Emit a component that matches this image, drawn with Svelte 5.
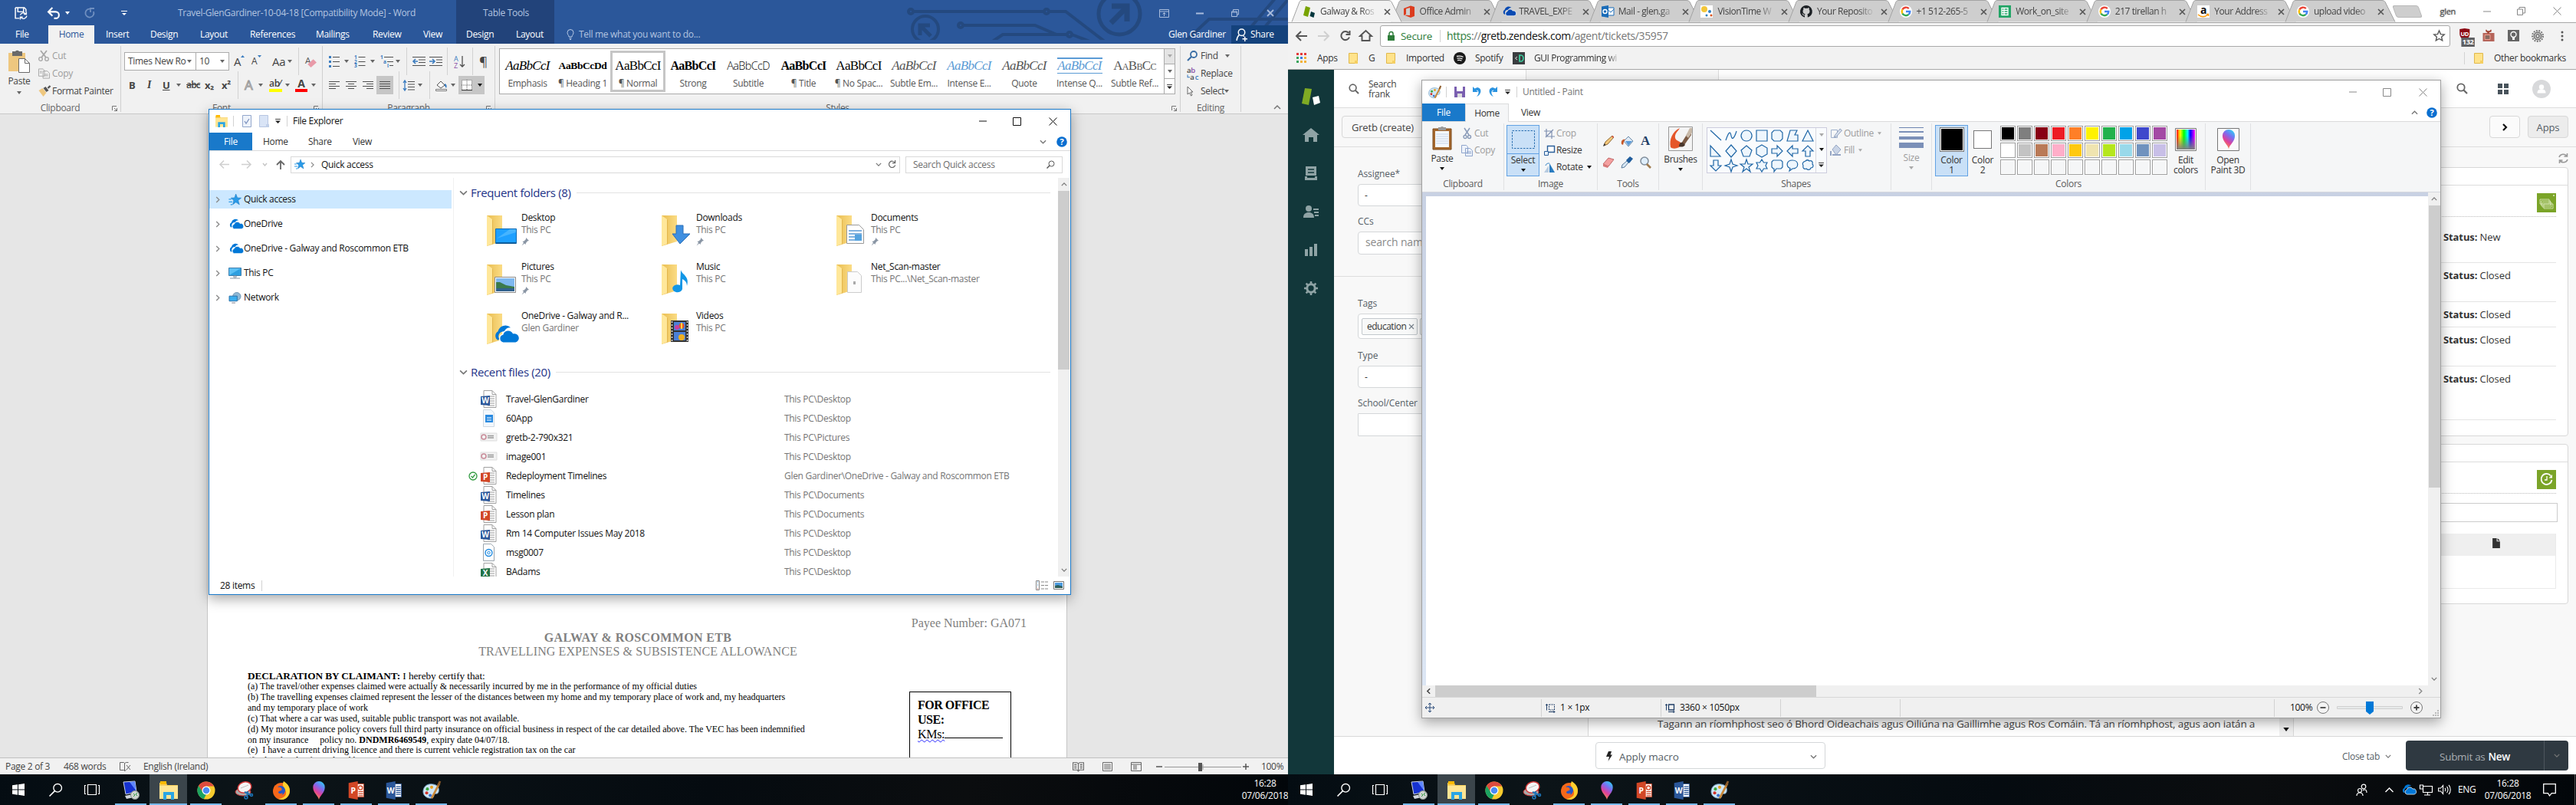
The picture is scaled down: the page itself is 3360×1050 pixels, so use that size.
<script>
  // Row item builders: x is the desktop x of the item, w its width.
  const I = (i, x, w, h = w, c = '') => ({ i, x, w, h, c });
  const T = (t, x, w, c = '') => ({ t, x, w, c });
  const V = (x, h = 36) => ({ i: 'sep', x, w: 1, h, c: 'vsep' });
  const D = (x) => ({ i: 'caret', x: x - 3, w: 6, h: 4, c: '' });

  const folderBase = '<path d="M0 0h20v34l-20 6z" fill="url(#fg)"/><path d="M0 0l7 5v32l-7 3z" fill="#ffe79a"/><path d="M7 5v32l1 .5V6z" fill="#e3b64c"/>';
  const cloud = '<path d="M4 12a4 4 0 0 1 0-7 6 6 0 0 1 10-3 5 5 0 0 0-5 3 4 4 0 0 0-4 6z" fill="#0078d7"/><path d="M8 14a3.4 3.4 0 0 1-.3-6.600A4.500 4.500 0 0 1 16 6.500 3.800 3.800 0 0 1 18 14z" fill="#0078d7" stroke="#fff" stroke-width=".8"/>';
  const officeDoc = (col, ch) => `<path d="M4 .5h11l5 5v17H4z" fill="#fff" stroke="#a0a0a0"/><path d="M15 .5v5h5" fill="none" stroke="#a0a0a0"/><path d="M9 8h9M9 11h9M9 14h9M9 17h9M9 20h9" stroke="#9a9a9a"/><path d="M0 8l12-1v13L0 19z" fill="${col}"/><text x="6" y="17" font-size="10" font-weight="700" fill="#fff" text-anchor="middle" font-family="Open Sans">${ch}</text>`;
  const officeApp = (col, ch, extra) => `<path d="M12 4h11v20H12z" fill="#fff" stroke="${col}"/>${extra}<path d="M0 2.500L14 0v28L0 25.500z" fill="${col}"/><text x="7" y="18.500" font-size="12" font-weight="700" fill="#fff" text-anchor="middle" font-family="Open Sans">${ch}</text>`;
  const google = '<circle cx="8" cy="8" r="8" fill="#fff"/><g fill="none" stroke-width="2.400"><path d="M11.800 4.200A5.300 5.300 0 0 0 3.400 5.400" stroke="#ea4335"/><path d="M3.400 5.400a5.300 5.300 0 0 0 0 5.200" stroke="#fbbc05"/><path d="M3.400 10.600a5.300 5.300 0 0 0 8.100 1.300" stroke="#34a853"/><path d="M11.500 11.900A5 5 0 0 0 13.300 8H8" stroke="#4285f4"/></g>';
  const alignLines = (a) => a.map(([x, w], n) => `<path d="M${x} ${1.5 + n * 3}h${w}" stroke="#505050"/>`).join('');

  const icons = {
    sep: ['1 1', ''],
    caret: ['6 4', '<path d="M0 0h6L3 4z" fill="#666"/>'],
    caretB: ['6 4', '<path d="M0 0h6L3 4z" fill="#111"/>'],
    caretW: ['6 4', '<path d="M0 0h6L3 4z" fill="#fff"/>'],
    caretG: ['6 4', '<path d="M0 0h6L3 4z" fill="#a9a9a9"/>'],
    qaW: ['8 7', '<path d="M0 .5h8" stroke="#fff"/><path d="M1 3h6L4 6z" fill="#fff"/>'],
    qaB: ['8 7', '<path d="M0 .5h8" stroke="#222"/><path d="M0 3h8L4 7z" fill="#222"/>'],
    wsave: ['16 16', '<path d="M1 1h11l2 2v3M1 1v13h5M4 1v5h7V1" fill="none" stroke="#fff" stroke-width="1.400"/><path d="M7 10a4 4 0 0 1 7-1M15 11a4 4 0 0 1-7 2M14.500 6v3h-3M7 15.500v-3h3" fill="none" stroke="#fff" stroke-width="1.300"/>'],
    wundo: ['16 14', '<path d="M6 0L1 5l5 5M1.500 5H10a4 4 0 0 1 0 8H8" fill="none" stroke="#fff" stroke-width="2"/>'],
    wredo: ['14 14', '<path d="M9 2A5.500 5.500 0 1 0 12 5M8 6V1h5" fill="none" stroke="#6f8fc0" stroke-width="1.800"/>'],
    bulb: ['10 14', '<path d="M3 10C3 8 1 7 1 4.500a4 4 0 0 1 8 0C9 7 7 8 7 10zM3.500 12h3M4 13.500h2" fill="none" stroke="#b9cbe6"/>'],
    ribbonOpt: ['13 11', '<path d="M.5.5h12v10H.5zM.5 3h12M6.500 9V5M4.500 6.500l2-2 2 2" fill="none" stroke="#a9bcdc"/>'],
    wmin: ['10 3', '<path d="M0 1.500h10" stroke="#a9bcdc" stroke-width="2"/>'],
    wres: ['10 10', '<path d="M.5 3h7v6.500h-7zM2.500 3V.5h7V7h-2M.5 4h7" fill="none" stroke="#a9bcdc"/>'],
    wx: ['10 10', '<path d="M1 1l8 8M9 1l-8 8" stroke="#a9bcdc" stroke-width="1.800"/>'],
    person: ['14 16', '<circle cx="7" cy="5" r="4" fill="none" stroke="#fff" stroke-width="1.400"/><path d="M4 8c-2 2-3 4-3 7M9 9l1 1M8 13h6M11 10v6" fill="none" stroke="#fff" stroke-width="1.400"/>'],
    paste: ['28 30', '<path d="M0 4h22v24H0z" fill="#eec77f"/><path d="M5 2h4a3 3 0 0 1 5 0h4v6H5z" fill="#6a6a6a"/><path d="M13.500 11.500h8l6 6v12h-14z" fill="#fff" stroke="#6a6a6a"/><path d="M21.500 11.500v6h6" fill="none" stroke="#6a6a6a"/>'],
    cut: ['14 14', '<path d="M3 0l7 9M11 0L4 9" stroke="#a6a6a6" stroke-width="1.800"/><circle cx="3" cy="11" r="2.300" fill="none" stroke="#a6a6a6" stroke-width="1.300"/><circle cx="11" cy="11" r="2.300" fill="none" stroke="#a6a6a6" stroke-width="1.300"/>'],
    copy: ['16 14', '<path d="M.5.500h6l2 2v8h-8zM6.500 3.500h6l3 3v7h-9z" fill="#f1f1f1" stroke="#a6a6a6"/><path d="M2 4h3M2 6h3M8.500 8h5M8.500 10h5" stroke="#a6a6a6"/>'],
    fpaint: ['15 14', '<path d="M0 6l5-3 5 6-4 5z" fill="#eec77f"/><path d="M6 3l3-2 4 5-3 2z" fill="#555"/><path d="M12 3l3-3" stroke="#555" stroke-width="2.400"/>'],
    up: ['5 3', '<path d="M0 3l2.500-3L5 3z" fill="#3a7cc0"/>'],
    eraser: ['14 16', '<text x="0" y="10" font-size="11" fill="#555" font-family="Open Sans">A</text><path d="M3 11l7-6 4 4-7 6z" fill="#e89aa8"/>'],
    bullets: ['14 15', '<g fill="#3a7cc0"><path d="M0 0h3v3H0zM0 6h3v3H0zM0 12h3v3H0z"/></g><path d="M5 1.500h9M5 7.500h9M5 13.500h9" stroke="#505050"/>'],
    numbering: ['15 16', '<g fill="#3a7cc0" font-size="6.500" font-family="Open Sans" font-weight="700"><text x="0" y="5">1</text><text x="0" y="11">2</text><text x="0" y="16">3</text></g><path d="M5.500 2.500h9M5.500 8.500h9M5.500 13.500h9" stroke="#505050"/>'],
    multi: ['18 16', '<g fill="#3a7cc0" font-size="6.500" font-family="Open Sans" font-weight="700"><text x="0" y="5">1</text><text x="4" y="11">a</text><text x="9" y="16">i</text></g><path d="M5 2.500h12M9 8.500h8M12 13.500h5" stroke="#505050"/>'],
    outdent: ['17 12', '<path d="M0 .5h17M8 4h9M8 7.500h9M0 11.500h17" stroke="#505050"/><path d="M7 6H1M4 3L1 6l3 3" fill="none" stroke="#3a7cc0" stroke-width="1.600"/>'],
    indent: ['17 12', '<path d="M0 .5h17M9 4h8M9 7.500h8M0 11.500h17" stroke="#505050"/><path d="M0 6h6M4 3l3 3-3 3" fill="none" stroke="#3a7cc0" stroke-width="1.600"/>'],
    sort: ['15 17', '<text x="0" y="8" font-size="9" fill="#3a7cc0" font-family="Open Sans">A</text><text x="0" y="16.500" font-size="9" fill="#8a50a8" font-family="Open Sans">Z</text><path d="M11 1v14M8 12l3 3 3-3" fill="none" stroke="#505050" stroke-width="1.300"/>'],
    al: ['14 12', alignLines([[0, 14], [0, 9], [0, 14], [0, 9]])],
    ac: ['14 12', alignLines([[0, 14], [3, 8], [0, 14], [3, 8]])],
    ar: ['14 12', alignLines([[0, 14], [5, 9], [0, 14], [5, 9]])],
    aj: ['14 12', alignLines([[0, 14], [0, 14], [0, 14], [0, 14]])],
    spacing: ['16 15', '<path d="M3 1v13M1 4l2-3 2 3M1 11l2 3 2-3" fill="none" stroke="#3a7cc0" stroke-width="1.300"/><path d="M7 2.500h9M7 6h9M7 9.500h9M7 13h9" stroke="#505050"/>'],
    wbucket: ['16 15', '<path d="M2 7l5-5 5 5-5 4z" fill="#fff" stroke="#505050"/><path d="M12 5c3 1 3 4 2 6l-2-3z" fill="#3a7cc0"/><path d="M.5 12.500h14v2H.5z" fill="#fff" stroke="#777"/>'],
    borders: ['14 14', '<path d="M0 0h14v14H0z" fill="#fff"/><path d="M.5 .5h13v13H.5zM7 0v14M0 7h14" fill="none" stroke="#555" stroke-dasharray="1 1"/><path d="M0 13.500h14" stroke="#333"/>'],
    launch: ['7 7', '<path d="M.5 6V.5H6M3 3l3.500 3.500M6.500 3v3.500H3" fill="none" stroke="#777"/>'],
    find: ['14 14', '<circle cx="9" cy="5" r="4" fill="none" stroke="#3a6ea5" stroke-width="1.800"/><path d="M6 8l-5 5" stroke="#3a6ea5" stroke-width="2.200"/>'],
    replace: ['16 15', '<text x="0" y="7" font-size="9" font-weight="600" fill="#444" font-family="Open Sans">a</text><text x="5" y="7" font-size="9" font-weight="600" fill="#8a50a8" font-family="Open Sans">b</text><text x="4" y="15" font-size="9" font-weight="600" fill="#444" font-family="Open Sans">a</text><text x="10" y="15" font-size="9" font-weight="600" fill="#3a7cc0" font-family="Open Sans">c</text><path d="M1 9v3h3" fill="none" stroke="#3a7cc0"/>'],
    cursor: ['9 14', '<path d="M1 1v10l2.500-2 2 4 1.500-1-2-4h3z" fill="#fff" stroke="#666"/>'],
    chevUp: ['10 6', '<path d="M1 5l4-4 4 4" fill="none" stroke="#777" stroke-width="1.500"/>'],
    chevDn: ['10 6', '<path d="M1 1l4 4 4-4" fill="none" stroke="#777" stroke-width="1.500"/>'],
    chevR: ['6 10', '<path d="M1 1l4 4-4 4" fill="none" stroke="#8a8a8a" stroke-width="1.500"/>'],
    chevL: ['6 10', '<path d="M5 1L1 5l4 4" fill="none" stroke="#444" stroke-width="1.800"/>'],
    proof: ['15 13', '<path d="M.5 1.500h5l1 1v10l-1-1h-5zM8.500 11.500l-2 1v-10l2-1h3M9 5l5 6M14 5l-5 6" fill="none" stroke="#666"/>'],
    book: ['14 12', '<path d="M.5 1.500h5L7 3l1.500-1.500h5v9h-5L7 12l-1.500-1.500h-5zM7 3v8M2 4h3M2 6h3M2 8h3M9 4h3M9 6h3M9 8h3" fill="none" stroke="#666"/>'],
    print: ['13 12', '<path d="M.5 .500h12v11H.500z" fill="#fff" stroke="#666"/><path d="M2 3h9M2 5h9M2 7h9M2 9h9" stroke="#666"/>'],
    web: ['14 12', '<path d="M.5 .500h13v11H.500zM.500 3h13M3 5h5M3 7h5M3 9h5" fill="none" stroke="#666"/>'],
    zoomTrack: ['100 12', '<path d="M0 6.500h100M50 3v7" stroke="#999"/><path d="M44 1h5v11h-5z" fill="#555"/>'],
    minus: ['8 8', '<path d="M0 4h8" stroke="#555" stroke-width="1.500"/>'],
    plus: ['8 8', '<path d="M0 4h8M4 0v8" stroke="#555" stroke-width="1.500"/>'],
    // File Explorer
    explorer: ['24 24', '<path d="M0 2h9l1 3h14v18H0z" fill="#f8cf5c"/><path d="M1 0h8v4H1z" fill="#ffb900"/><path d="M0 6h24v17H0z" fill="#ffe593"/><path d="M5 24V14h14v10h-4v-6H9v6z" fill="#2aa5e4"/>'],
    check: ['12 16', '<path d="M.5.500h11v15H.500z" fill="#eef3fb" stroke="#93a7cc"/><path d="M3 8l2 3 4-6" fill="none" stroke="#7d93bf" stroke-width="1.300"/>'],
    blank: ['13 16', '<path d="M.5.500h11v15H.500z" fill="#d9e4f6" stroke="#b7c6e2"/><path d="M9 12h4v4H9z" fill="#c0cfe8"/>'],
    min: ['10 2', '<path d="M0 1h10" stroke="#111"/>'],
    max: ['11 11', '<path d="M.5.500h10v10H.500z" fill="none" stroke="#111"/>'],
    x: ['11 11', '<path d="M.5.500l10 10M10.500.500l-10 10" stroke="#111"/>'],
    minG: ['10 2', '<path d="M0 1h10" stroke="#888"/>'],
    maxG: ['11 11', '<path d="M.5.500h10v10H.500z" fill="none" stroke="#888"/>'],
    xG: ['11 11', '<path d="M.5.500l10 10M10.500.500l-10 10" stroke="#888"/>'],
    resG: ['11 11', '<path d="M.5 3h7v7.500h-7zM3 3V.5h7.500V8h-3" fill="none" stroke="#888"/>'],
    help: ['14 14', '<circle cx="7" cy="7" r="6.800" fill="#0a6fd0"/><text x="7" y="11" font-size="11" font-weight="700" fill="#fff" text-anchor="middle" font-family="Open Sans">?</text>'],
    back: ['13 11', '<path d="M6 .5L1 5.500l5 5M1 5.500h12" fill="none" stroke="#d0d0d0" stroke-width="1.600"/>'],
    fwd: ['13 11', '<path d="M7 .500l5 5-5 5M12 5.500H0" fill="none" stroke="#d0d0d0" stroke-width="1.600"/>'],
    dnS: ['7 5', '<path d="M1 1l2.500 3L6 1" fill="none" stroke="#c4c4c4" stroke-width="1.400"/>'],
    upA: ['12 12', '<path d="M1 6l5-5 5 5M6 1v11" fill="none" stroke="#666" stroke-width="1.800"/>'],
    star: ['14 13', '<path d="M8 0l1.700 4.300 4.300.200-3.400 2.800L12 12 8 9.300 4.500 12l1.100-4.700L2.500 4.500l4-.200z" fill="#2a9be8" stroke="#1a78c0" stroke-width=".5"/><path d="M0 6h3M0 9h4M2 12h2" stroke="#2a9be8"/>'],
    refresh: ['12 12', '<path d="M10 3.500A4.500 4.500 0 1 0 10.500 7M10.500 0v4h-4" fill="none" stroke="#666" stroke-width="1.300"/>'],
    mag: ['11 11', '<circle cx="6.500" cy="4.500" r="3.500" fill="none" stroke="#555"/><path d="M4 7L.5 10.500" stroke="#555" stroke-width="1.500"/>'],
    cloud: ['18 15', cloud],
    cloudD: ['18 15', cloud.replaceAll('#0078d7', '#094ab2')],
    pc: ['17 15', '<path d="M.5.500h16v10H.500z" fill="#5bc0f5" stroke="#3f7fae"/><path d="M1 10L16 1v9z" fill="#2e9fe0"/><path d="M2 14h13M7 11h3v2H7z" fill="none" stroke="#8896a5"/>'],
    net: ['17 16', '<circle cx="11" cy="6" r="5.500" fill="#8fb8d4" stroke="#6a90b0"/><path d="M.5 5.500h11v7H.500z" fill="#3aaeee" stroke="#2a6fa8"/><path d="M4 15h5" stroke="#778"/>'],
    pin: ['11 10', '<path d="M6 0l4 4-2 .500L6 7l-.500 2L4 7.500.500 10.500 3 6.500 1.500 5l2-.500L6 2z" fill="#8a96a5"/>'],
    fDesktop: ['40 42', folderBase + '<path d="M11.500 17.500h27v19h-27z" fill="#1ea0ff" stroke="#0f6bb4"/><path d="M12 36h26" stroke="#0a4e86" stroke-width="1.500"/><path d="M13 30L30 18h8v4z" fill="#46b4ff"/>'],
    fDown: ['40 42', folderBase + '<path d="M19 13h9v11h9L24 37 14 24h5z" fill="#3f8fe0" stroke="#2a6fb8"/>'],
    fPic: ['40 42', folderBase + '<path d="M10.500 16.500h27v20h-27z" fill="#fff" stroke="#8a8a8a"/><path d="M12 18h24v17H12z" fill="#7eb8f0"/><path d="M12 23l5 0 8 4 11 2v6H12z" fill="#3c7a4d"/><path d="M12 31h24v4H12z" fill="#31618e"/>'],
    fMusic: ['40 42', folderBase + '<path d="M25 7c1 6 12 8 8 21 0-6-4-8-6-9v13a6.500 5 0 1 1-3-5z" fill="#1196e6"/>'],
    fOne: ['40 42', folderBase + '<g transform="translate(8 15) scale(1.650)">' + cloud + '</g>'],
    fVid: ['40 42', folderBase + '<path d="M12 9h23v28H12z" fill="#333"/><path d="M16 11h15v11H16zM16 24h15v11H16z" fill="#4a80d8"/><circle cx="26" cy="16" r="3.500" fill="#e8542a"/><path d="M26 12v8" stroke="#ffd23c" stroke-width="2"/><circle cx="20" cy="18" r="3" fill="#c83fa0"/><circle cx="26" cy="31" r="4" fill="#f0b020"/><path d="M13.500 10v27M33.500 10v27" stroke="#ddd" stroke-width="1.500" stroke-dasharray="2 2"/>'],
    fDoc: ['40 42', folderBase + '<path d="M13.500 12.500h16l6 6v18h-22z" fill="#fff" stroke="#999"/><path d="M16 20h17M16 24h17M16 28h17M16 32h12" stroke="#5b9bd5" stroke-width="1.500"/><path d="M24 25h9v8h-9z" fill="#55a3df"/>'],
    fNet: ['40 42', folderBase + '<path d="M14.500 9.500h13l5 5v22h-18z" fill="#fcfcfc" stroke="#ccc"/><path d="M22 22h3v4h-3z" fill="#aaa"/>'],
    w: ['21 23', officeDoc('#2b579a', 'W')],
    p: ['21 23', officeDoc('#d24726', 'P')],
    xl: ['21 23', officeDoc('#217346', 'X')],
    app: ['21 23', '<path d="M3.500 .500h10l4 4v18h-14z" fill="#f3f8fd" stroke="#cfd8e0"/><path d="M6 7h10v10H6z" fill="#2a8ae0"/><path d="M8 11h6M8 14h6" stroke="#fff"/>'],
    img: ['21 23', '<path d="M0 6h21v10H0z" fill="#f2f2f2" stroke="#ddd"/><circle cx="4" cy="11" r="3" fill="none" stroke="#c98d9a" stroke-width="1.600"/><path d="M9 9.500h8M9 12h8" stroke="#999" stroke-width="1.600"/>'],
    msg: ['21 23', '<path d="M3.500 .500h10l4 4v18h-14z" fill="#fff" stroke="#9aa4ad"/><circle cx="10.500" cy="12" r="4.500" fill="none" stroke="#1e8ae0" stroke-width="1.400"/><circle cx="10.500" cy="12" r="1.700" fill="none" stroke="#1e8ae0"/>'],
    ok: ['12 12', '<circle cx="6" cy="6" r="5" fill="#fff" stroke="#2f9a3f" stroke-width="1.300"/><path d="M3.500 6l2 2 3-4" fill="none" stroke="#2f9a3f" stroke-width="1.300"/>'],
    list: ['16 13', '<path d="M.5.500h4v12h-4zM7 2h4M7 6.500h4M7 11h4M12 2h4M12 6.500h4M12 11h4" fill="none" stroke="#888"/><path d="M2 2h1M2 6h1" stroke="#2a7ad0"/><path d="M2 11h1" stroke="#d03a2a"/>'],
    thumb: ['14 11', '<path d="M.5.500h13v10H.500z" fill="#fff" stroke="#777"/><path d="M2 2h10v7H2z" fill="#4c9be0"/><path d="M2 6l4-1 6 2v2H2z" fill="#2f5f5a"/>'],
    // Chrome
    zd: ['16 16', '<path d="M3 1l6 2-3 12-6-2z" fill="#78a300"/><path d="M10 8l5 2-1.500 6-5-2z" fill="#03363d"/>'],
    zdL: ['26 24', '<path d="M5 1l9 1-4 21-9-2z" fill="#7faa24"/><path d="M15 13l8-2 2 9-8 3z" fill="#fff"/>'],
    office: ['16 16', '<path d="M1 4l9-3.500 5 1.500v12l-5 2-9-3.500 8 .500V3L4 4.500v7L1 13z" fill="#dc3c1e"/>'],
    outlook: ['16 16', '<path d="M7 3h9v10H7z" fill="#fff" stroke="#1a6cb8"/><path d="M7 5l5 4 4-4" fill="none" stroke="#1a6cb8"/><path d="M0 1.500L9 0v16l-9-1.500z" fill="#1a6cb8"/><circle cx="4.500" cy="8" r="2.500" fill="none" stroke="#fff" stroke-width="1.400"/>'],
    vision: ['16 16', '<path d="M0 0h16v16H0z" fill="#fff"/><circle cx="5" cy="5" r="4" fill="#f3c63a"/><circle cx="12" cy="8" r="2" fill="#2f7fc0"/><circle cx="8" cy="13" r="1.500" fill="#2f7fc0"/><circle cx="14" cy="13" r="1.500" fill="#d9531e"/>'],
    github: ['16 16', '<path d="M8 0a8 8 0 0 0-2.500 15.600c.4.100.5-.2.500-.4v-2c-2 .400-2.700-1-2.700-1.300-.5-1-1-1-1-1.300.9-.3 1.500.500 2 1.200.6 1 1.600.700 1.900.500.1-.5.300-.8.500-1C5 11 3.500 10.300 3.500 7.500c0-1 .4-1.700.9-2.300-.2-.6-.3-1.400.1-2.200.8 0 1.500.4 2.100.9a7 7 0 0 1 2.800 0c.6-.5 1.400-.9 2.100-.9.400.8.300 1.600.1 2.200.5.600.9 1.300.9 2.300 0 2.800-1.500 3.500-3.200 3.700.3.300.5.700.5 1.400v2.600c0 .2.100.5.500.4A8 8 0 0 0 8 0z" fill="#1b1f23"/>'],
    google: ['16 16', google],
    sheets: ['16 16', '<path d="M0 0h16v16H0z" fill="#23a566"/><path d="M4 3.500h8v9H4zM4 6.500h8M4 9.500h8M7 3.500v9" fill="none" stroke="#fff" stroke-width="1.300"/>'],
    amazon: ['16 16', '<path d="M0 0h16v16H0z" fill="#fff"/><text x="8" y="10.500" font-size="14" font-weight="700" text-anchor="middle" fill="#111" font-family="Open Sans">a</text><path d="M1 12c4 3.500 9 3.500 13 0M14.500 14v-2.500h-2.500" fill="none" stroke="#ff9900" stroke-width="1.500"/>'],
    tabX: ['9 9', '<path d="M1 1l7 7M8 1L1 8" stroke="#555" stroke-width="1.600"/>'],
    cback: ['15 14', '<path d="M7 1L1 7l6 6M1 7h14" fill="none" stroke="#555" stroke-width="2"/>'],
    cfwd: ['15 14', '<path d="M8 1l6 6-6 6M14 7H0" fill="none" stroke="#d0d0d0" stroke-width="2"/>'],
    creload: ['15 15', '<path d="M12 4A5.500 5.500 0 1 0 13 9.500M13.500 1v5h-5" fill="none" stroke="#555" stroke-width="2"/>'],
    chome: ['17 15', '<path d="M1 8l7.500-7L16 8h-2.500v6h-10V8z" fill="none" stroke="#555" stroke-width="1.900"/>'],
    lock: ['9 12', '<path d="M0 5h9v7H0z" fill="#2e7d3a"/><path d="M2 5V3a2.500 2.500 0 0 1 5 0v2" fill="none" stroke="#2e7d3a" stroke-width="1.500"/>'],
    cstar: ['14 14', '<path d="M7 1l1.800 4.200 4.500.400-3.400 3 1 4.400L7 10.700 3.100 13l1-4.400-3.400-3 4.500-.400z" fill="none" stroke="#555" stroke-width="1.300"/>'],
    ublock: ['19 22', '<path d="M1 1l6-1 6 1v5c0 5-3 7-6 8-3-1-6-3-6-8z" fill="#8b0a14"/><text x="7" y="9" font-size="7" font-weight="700" text-anchor="middle" fill="#fff" font-family="Open Sans">UD</text><path d="M3 11h16v11H3z" fill="#5f6063"/><text x="11" y="19.500" font-size="8.500" font-weight="700" text-anchor="middle" fill="#fff" font-family="Open Sans">132</text>'],
    tv: ['15 15', '<path d="M0 4h15v11H0z" fill="#b5645a"/><path d="M2.500 6.500h7v6h-7z" fill="#8b6a60" stroke="#f0a090"/><path d="M7 4L4 0M7 4l4-4M4 2h7" stroke="#a04030" stroke-width="1.400"/>'],
    lamp: ['15 15', '<path d="M0 0h15v15H0z" fill="#666"/><circle cx="7.500" cy="6" r="3.500" fill="none" stroke="#fff" stroke-width="1.400"/><path d="M6 10h3v3H6z" fill="#fff"/>'],
    gearG: ['16 16', '<circle cx="8" cy="8" r="7" fill="none" stroke="#777" stroke-width="2" stroke-dasharray="2 1.400"/><circle cx="8" cy="8" r="5" fill="#b5b5b5" stroke="#555"/><circle cx="8" cy="8" r="2" fill="#eee" stroke="#555"/>'],
    dots: ['4 14', '<circle cx="2" cy="2" r="1.500" fill="#555"/><circle cx="2" cy="7" r="1.500" fill="#555"/><circle cx="2" cy="12" r="1.500" fill="#555"/>'],
    apps: ['13 13', '<path d="M0 0h3v3H0zM5 0h3v3H5zM10 0h3v3h-3z" fill="#e33b3b"/><path d="M0 5h3v3H0z" fill="#3ba55d"/><path d="M5 5h3v3H5z" fill="#3b7de3"/><path d="M10 5h3v3h-3zM5 10h3v3H5zM10 10h3v3h-3z" fill="#f2b23b"/><path d="M0 10h3v3H0z" fill="#3ba55d"/>'],
    bfold: ['12 14', '<path d="M.5.500h11v13H.500z" fill="#ffe38b" stroke="#e0b84c"/><path d="M8 10h4v4H8z" fill="#f5cf62"/>'],
    spotify: ['16 16', '<circle cx="8" cy="8" r="8" fill="#191919"/><path d="M4 5.500c3-.8 6-.5 8.500.8M4.500 8.200c2.500-.6 5-.4 7 .7M5 10.700c2-.5 4-.3 5.500.6" fill="none" stroke="#eee" stroke-width="1.300"/>'],
    dIcon: ['16 16', '<path d="M0 0h16v16H0z" fill="#3a3d40"/><path d="M9 4h2a3 4 0 0 1 0 8H9z" fill="none" stroke="#3fd0a0" stroke-width="1.700"/><path d="M6 6L3.500 8 6 10" fill="none" stroke="#ddd"/>'],
    // Zendesk
    zhome: ['22 18', '<path d="M11 0l11 9h-3v9h-5v-6H8v6H3V9H0z" fill="#8fa3a5"/>'],
    ztick: ['16 18', '<path d="M1 0h14v12H1z" fill="#8fa3a5"/><path d="M4 4h8M4 8h8" stroke="#12373a" stroke-width="1.500"/><path d="M0 13h3v2h10v-2h3v5H0z" fill="#8fa3a5"/>'],
    zppl: ['20 16', '<circle cx="7" cy="4" r="4" fill="#8fa3a5"/><path d="M0 16c0-5 3-7 7-7s7 2 7 7zM13 4h7v2h-7zM14 8h6v2h-6zM15 12h5v2h-5z" fill="#8fa3a5"/>'],
    zbar: ['17 16', '<path d="M0 7h4v9H0zM6 4h4v12H6zM12 0h4v16h-4z" fill="#8fa3a5"/>'],
    zgear: ['18 18', '<circle cx="9" cy="9" r="5.200" fill="none" stroke="#8fa3a5" stroke-width="3"/><path d="M9 0v3M9 15v3M0 9h3M15 9h3M2.600 2.600l2 2M13.400 13.400l2 2M2.600 15.400l2-2M13.400 4.600l2-2" stroke="#8fa3a5" stroke-width="2.600"/>'],
    zs: ['15 15', '<circle cx="6" cy="6" r="4.700" fill="none" stroke="#666" stroke-width="1.800"/><path d="M9.500 9.500L14 14" stroke="#666" stroke-width="2.200"/>'],
    grid4: ['14 14', '<path d="M0 0h6v6H0zM8 0h6v6H8zM0 8h6v6H0zM8 8h6v6H8z" fill="#49545c"/>'],
    avatar: ['24 24', '<circle cx="12" cy="12" r="12" fill="#d8d9db"/><circle cx="12" cy="9.500" r="3.200" fill="#fff"/><path d="M6.500 17.500c0-4 2-5 5.500-5s5.500 1 5.500 5z" fill="#fff"/>'],
    zref: ['13 13', '<path d="M1 5a5.500 5.500 0 0 1 10-1M12 8a5.500 5.500 0 0 1-10 1M11.500 0v4h-4M1.500 13V9h4" fill="none" stroke="#999" stroke-width="1.600"/>'],
    tickets: ['25 25', '<path d="M0 0h25v25H0z" fill="#7ba428"/><g fill="#7ba428" stroke="#cfe0a8"><path d="M4 8h12v6H4zM5.500 10h12v6h-12zM7 12h12v6H7zM9 14h12v6H9z"/></g><circle cx="22" cy="3" r="1" fill="#dfe9c4"/>'],
    timer: ['25 25', '<path d="M0 0h25v25H0z" fill="#7ba428"/><path d="M18 7.500A7 7 0 1 0 19.500 13" fill="none" stroke="#fff" stroke-width="1.800"/><path d="M20 6v4.500h-4.500z" fill="#fff"/><path d="M13 8v5h-3" fill="none" stroke="#fff" stroke-width="1.300"/>'],
    doc: ['9 12', '<path d="M0 0h5v4h4v8H0zM6 0l3 3H6z" fill="#333"/>'],
    bolt: ['8 13', '<path d="M3 0h4L5.500 4.500H8L2.500 13 4 7H0z" fill="#222"/>'],
    zx: ['8 8', '<path d="M1 1l6 6M7 1L1 7" stroke="#78838d" stroke-width="1.200"/>'],
    gt: ['6 10', '<path d="M1 1l4 4-4 4" fill="none" stroke="#111" stroke-width="2.200"/>'],
    // Paint
    palette: ['26 26', '<path d="M12 4c8 0 12 4 11 10-1 5-4 3-6 4s0 3-2 5C10 26 1 22 1 15 1 9 5 4 12 4z" fill="#cfe6f5" stroke="#6f9dc0"/><circle cx="7" cy="11" r="2.200" fill="#3aa640"/><circle cx="13" cy="8.500" r="2.200" fill="#e8a020"/><circle cx="6" cy="16.500" r="2.200" fill="#d0342c"/><circle cx="11" cy="20" r="2.200" fill="#3a70d0"/><path d="M13 24L24 3" stroke="#c8883a" stroke-width="3"/><path d="M22 6l3-6" stroke="#8b5a2b" stroke-width="3"/>'],
    psave: ['14 14', '<path d="M0 0h14v14H0z" fill="#7a5fb0"/><path d="M3 0h8v6H3z" fill="#fff"/><path d="M4 9h6v5H4z" fill="#ddd"/>'],
    pundo: ['13 14', '<path d="M1 0v7h7L5.500 4.800C9 4 10 9 6 13c6-2 8-11 1-12L3.500 2.500z" fill="#2a93e0"/>'],
    predo: ['13 14', '<path d="M12 0v7H5l2.500-2.200C4 4 3 9 7 13 1 11-1 2 6 1l3.500 1.500z" fill="#2a93e0"/>'],
    ppaste: ['26 31', '<path d="M1 3h24v27H1z" fill="#a5682e" stroke="#7d4a1c"/><path d="M4 6h18v21H4z" fill="#f5f9ff"/><path d="M5 10h16M5 13h16M5 16h16M5 19h16M5 22h16" stroke="#c5d3e6"/><path d="M8 1h3a2.500 2.500 0 0 1 4 0h3v4H8z" fill="#999"/>'],
    pcut: ['11 14', '<path d="M2 0l6 9M9 0L3 9" stroke="#8a9bb8" stroke-width="1.500"/><circle cx="3" cy="11.500" r="2" fill="none" stroke="#8a9bb8" stroke-width="1.400"/><circle cx="8.500" cy="11.500" r="2" fill="none" stroke="#8a9bb8" stroke-width="1.400"/>'],
    pcopy: ['15 15', '<path d="M.5.500h6l2 2v8h-8zM5.500 4.500h6l3 3v7h-9z" fill="#eef3fb" stroke="#8fa5cc"/><path d="M7 9h6M7 11h6" stroke="#8fa5cc"/>'],
    marquee: ['30 24', '<path d="M.5.500h29v23H.500z" fill="none" stroke="#2a6fb0" stroke-dasharray="2.500 1.500"/>'],
    crop: ['14 13', '<path d="M3 0v10h11M0 3h10v10M2 11L12 1" fill="none" stroke="#7e8fb0" stroke-width="1.200"/>'],
    resize: ['14 13', '<path d="M4.500.500h9v8h-9z" fill="#fff" stroke="#2a5f9a" stroke-width="1.400"/><path d="M.500 7.500h5v5h-5z" fill="#e6f0fb" stroke="#2a5f9a"/>'],
    rotate: ['14 13', '<path d="M0 13h6V4z" fill="#b8cce0"/><path d="M7 13V1l7 12z" fill="#2a7cc0"/><path d="M2 4c1-3 3-3 5-3" fill="none" stroke="#2a7cc0"/>'],
    pencil: ['16 16', '<path d="M2 14l2-5 9-8 2 2-8 9z" fill="#f3c77a" stroke="#8d6a3a"/><path d="M1 15l1.500-4 2 2z" fill="#333"/><path d="M12 2l2-1 1 2-1 1z" fill="#d85a4a"/>'],
    pfill: ['17 16', '<path d="M4 8l6-6 6 6-6 7z" fill="#dfeaf5" stroke="#6788a8"/><path d="M6 8h9l-5 6z" fill="#5b9bd8"/><path d="M1 12c-1-5 2-7 5-6-2 1-2 4-3 7z" fill="#c85a2a"/>'],
    eras: ['16 14', '<path d="M1 9l7-8 7 2-7 9z" fill="#f4a0a0" stroke="#c06868"/><path d="M1 9v3l6 2 1-2z" fill="#d87878"/>'],
    picker: ['16 16', '<path d="M1 15l1-4 6-5 2 2-5 6z" fill="#d9e8f5" stroke="#5b7c9c"/><path d="M7 5l5-5 4 3-5 6z" fill="#1f5c9c"/>'],
    pmag: ['15 16', '<circle cx="6" cy="6" r="5" fill="#dfeefb" stroke="#7f8c9a" stroke-width="1.500"/><path d="M9 10l5 5" stroke="#a07c50" stroke-width="2.600"/>'],
    brush: ['32 32', '<path d="M.500.500h31v31H.500z" fill="#f4f4f4" stroke="#9a9a9a"/><path d="M3 27c-2-10 2-20 12-25-2 4-7 7-6 13 1 4 7 4 9 8-3 6-12 7-15 4z" fill="#e5562a"/><path d="M17 22l8-13 5-4v6l-9 13z" fill="#7b5a44"/><path d="M23 12l5-10 3 0v6l-5 7z" fill="#c8b9a8"/><path d="M14 26c0-4 2-6 5-5l3 3c-2 3-5 3-8 2z" fill="#4a372c"/>'],
    outl: ['15 14', '<path d="M.5 2.500h8v10h-8z" fill="none" stroke="#9fb0cc"/><path d="M5 10l7-9 2.500 2-7 8-3 1z" fill="#d8e0ee" stroke="#8fa0bd"/>'],
    pfillG: ['16 16', '<path d="M3 7l5-6 6 6-6 7z" fill="#c9d4e6" stroke="#94a5c4"/><path d="M0 9h2v6H0zM3 13h11v2H3z" fill="#94a5c4"/>'],
    lines: ['32 28', '<path d="M0 .500h32" stroke="#6d84b0"/><path d="M0 5h32v2H0zM0 12h32v4H0zM0 20h32v7H0z" fill="#7b90b8"/>'],
    spectrum: ['28 30', '<path d="M.500.500h27v29H.500z" fill="#fff" stroke="#777"/><path d="M2 2h24v26H2z" fill="url(#sp)"/><path d="M2 2h24v26H2z" fill="url(#sk)"/>'],
    p3d: ['20 28', '<path d="M10 28C9 22 1 18 1 9a9 9 0 0 1 18 0c0 9-8 13-9 19z" fill="url(#p3)"/>'],
    p3box: ['29 30', '<path d="M.500.500h28v29H.500z" fill="#fafafa" stroke="#777"/><g transform="translate(6 2) scale(.9)"><path d="M10 28C9 22 1 18 1 9a9 9 0 0 1 18 0c0 9-8 13-9 19z" fill="url(#p3)"/></g>'],
    move: ['12 12', '<path d="M6 0v12M0 6h12M4 2l2-2 2 2M4 10l2 2 2-2M2 4L0 6l2 2M10 4l2 2-2 2" fill="none" stroke="#2a4a78"/>'],
    selSz: ['13 12', '<path d="M1.500 9V1M0 2.500L1.500 1 3 2.500M4 11h8M10.500 9.500L12 11l-1.500 1.500" fill="none" stroke="#1f3d66"/><path d="M4.500 1.500h7v7h-7z" fill="none" stroke="#1f3d66" stroke-dasharray="2 1"/>'],
    imgSz: ['13 12', '<path d="M1.500 9V1M0 2.500L1.500 1 3 2.500M4 11h8M10.500 9.500L12 11l-1.500 1.500" fill="none" stroke="#1f3d66"/><path d="M4.500 1.500h7v7h-7z" fill="none" stroke="#1f3d66" stroke-width="1.300"/>'],
    zm: ['16 16', '<circle cx="8" cy="8" r="7.500" fill="#f4f4f4" stroke="#777"/><path d="M4.500 8h7" stroke="#444" stroke-width="1.800"/>'],
    zp: ['16 16', '<circle cx="8" cy="8" r="7.500" fill="#f4f4f4" stroke="#777"/><path d="M4.500 8h7M8 4.500v7" stroke="#444" stroke-width="1.800"/>'],
    ptrack: ['86 18', '<path d="M.500 7.500h85v3H.500z" fill="#e7eaea" stroke="#d0d0d0"/><path d="M38 1h10v13l-5 4-5-4z" fill="#0078d7"/>'],
    grip: ['8 8', '<path d="M6 0h2v2H6zM3 3h2v2H3zM6 3h2v2H6zM0 6h2v2H0zM3 6h2v2H3zM6 6h2v2H6z" fill="#bbb"/>'],
    // Taskbar
    start: ['16 16', '<path d="M0 2.300L7 1.300v6.200H0zM8 1.200L16 0v7.500H8zM0 8.500h7v6.300l-7-1zM8 8.500h8V16l-8-1.200z" fill="#fff"/>'],
    tsearch: ['16 16', '<circle cx="10.500" cy="5.500" r="5" fill="none" stroke="#fff" stroke-width="1.300"/><path d="M7 9l-6.500 6.500" stroke="#fff" stroke-width="1.500"/>'],
    tview: ['20 14', '<path d="M4.500.500h11v13h-11zM2 1.500H.500v11H2M18 1.500h1.500v11H18" fill="none" stroke="#fff" stroke-width="1.200"/>'],
    rdp: ['24 24', '<path d="M2 1l15-1 2 14-14 3z" fill="#1632d0" stroke="#cdd6e6"/><path d="M10 1l7-.500 1.500 12z" fill="#5f86ff"/><path d="M4 19l10-2 2 4-10 2z" fill="#cfd5db"/><circle cx="17" cy="18" r="5.500" fill="#cfd4d0" stroke="#8a938c"/><path d="M15 16l2 2-2 2M20 15l-2 2 2 2" fill="none" stroke="#2f9a3f"/>'],
    chrome: ['24 24', '<circle cx="12" cy="12" r="11.500" fill="#f7cb2d"/><path d="M12 .500a11.500 11.500 0 0 1 10 6H12L7 14 2 6A11.500 11.500 0 0 1 12 .500z" fill="#dd4b3e"/><path d="M2 6l6 9 4 2-3 6.100A11.500 11.500 0 0 1 2 6z" fill="#1ca261"/><circle cx="12" cy="12" r="5.500" fill="#fff"/><circle cx="12" cy="12" r="4.300" fill="#4a8af4"/>'],
    snip: ['24 24', '<ellipse cx="11" cy="14" rx="10" ry="5" fill="#aaa" stroke="#c33"/><ellipse cx="13" cy="8" rx="9" ry="7" fill="#f4f4f4" stroke="#d43a3a" stroke-width="1.500" transform="rotate(-20 13 8)"/><path d="M8 9l10-4" stroke="#bbb"/><path d="M13 14l8 4M17 13l-1 8" stroke="#1d75b8" stroke-width="2"/><circle cx="15" cy="21" r="2" fill="none" stroke="#1d75b8" stroke-width="1.500"/><circle cx="22" cy="18" r="1.500" fill="none" stroke="#1d75b8" stroke-width="1.500"/>'],
    firefox: ['24 24', '<circle cx="12" cy="13" r="11" fill="#f5681a"/><path d="M15 0c8 5 10 12 6 19-3 5-9 6-13 4 9-1 12-6 9-12-3-4-4-7-2-11z" fill="#ffcf2e"/><circle cx="11" cy="12" r="6" fill="#2456c8"/><path d="M3 6c2-1 4 0 5 2 3-1 6 2 4 4-3 1-4 1-4 3 2 2 5 1 6 0-1 5-8 6-11 1-1-3-1-7 0-10z" fill="#f5681a"/>'],
    ppt: ['24 28', officeApp('#d24726', 'P', '<circle cx="18" cy="10" r="3" fill="none" stroke="#d24726" stroke-width="1.600"/><path d="M15 16h7M15 19h7M15 22h7" stroke="#d24726" stroke-width="1.500"/>')],
    word: ['24 28', officeApp('#2b579a', 'W', '<path d="M15 8h7M15 11h7M15 14h7M15 17h7M15 20h7" stroke="#2b579a" stroke-width="1.500"/>')],
    ppl: ['15 16', '<circle cx="10" cy="4" r="2.800" fill="none" stroke="#fff" stroke-width="1.200"/><circle cx="5" cy="9" r="2.500" fill="none" stroke="#fff" stroke-width="1.200"/><path d="M1 16c0-3 2-4 4-4s4 1 4 4M9 9c3-2 5-1 5 3" fill="none" stroke="#fff" stroke-width="1.200"/>'],
    tUp: ['12 7', '<path d="M1 6l5-5 5 5" fill="none" stroke="#fff" stroke-width="1.400"/>'],
    tnet: ['17 15', '<path d="M4.500 2.500h12v8h-12zM10.500 10.500v3M6 14h8M.500 1h4v5h-4z" fill="none" stroke="#fff" stroke-width="1.200"/>'],
    snd: ['17 14', '<path d="M.600 5h3l3-3.500v11L3.600 9h-3z" fill="none" stroke="#fff" stroke-width="1.100"/><path d="M9 5c1 1 1 3 0 4M11.500 3c2 2 2 6 0 8M14 1c3 3 3 9 0 12" fill="none" stroke="#fff" stroke-width="1.100"/>'],
    notif: ['17 17', '<path d="M.700.700h15.600v12h-5L8.500 16l-2-3.300H.700z" fill="none" stroke="#fff" stroke-width="1.300"/>']
  };

  const wordTabs = [T('File', 20, 22), T('Home', 63, 60, 'on'), T('Insert', 138, 34), T('Design', 196, 40), T('Layout', 261, 40), T('References', 326, 62), T('Mailings', 412, 50), T('Review', 486, 42), T('View', 552, 32), T('Design', 608, 40), T('Layout', 673, 40), I('bulb', 739, 10, 14), T('Tell me what you want to do...', 755, 175, 'dim'), T('Glen Gardiner', 1524, 78), { t: '', x: 1606, w: 74, c: 'share' }];
  const fontRow1 = [T('Times New Ro', 162, 94, 'box'), T('10', 255, 44, 'box'), T('A', 305, 9, 'big'), I('up', 314, 5, 3, 'sup'), T('A', 328, 8), I('up', 336, 5, 3, 'sup flip'), T('Aa', 355, 20, 'big'), D(378), V(389), I('eraser', 398, 15, 17)];
  const fontRow2 = [T('B', 168, 9, 'b'), T('I', 192, 7, 'bi'), T('U', 212, 10, 'bu'), D(233), T('abc', 243, 20, 'strike'), T('x₂', 267, 14, 'b'), T('x²', 289, 13, 'b'), V(310), T('A', 319, 14, 'ghost'), D(340), T('ab⁄', 351, 17, 'hl'), D(375), T('A', 385, 16, 'red'), D(409)];
  const paraRow1 = [I('bullets', 429, 14, 15), D(452), I('numbering', 462, 15, 16), D(486), I('multi', 496, 18, 16), D(519), V(530), I('outdent', 538, 17, 12), I('indent', 560, 17, 12), V(583), I('sort', 592, 15, 17), V(616), T('¶', 625, 12, 'pil')];
  const paraRow2 = [I('al', 429, 14, 12), I('ac', 451, 14, 12), I('ar', 473, 14, 12), I('aj', 491, 22, 12, 'press'), V(520), I('spacing', 525, 16, 15), D(548), V(560), I('wbucket', 568, 16, 15), D(591), I('borders', 598, 22, 14, 'press'), I('caretB', 620, 12, 4, 'press')];
  // Gallery entries: name, sample look, sample text.
  const styles = [['Emphasis', 'it', 'AaBbCcI'], ['¶ Heading 1', 'bd sml', 'AaBbCcDd'], ['¶ Normal', 'sel', 'AaBbCcI'], ['Strong', 'bd', 'AaBbCcI'], ['Subtitle', 'sans', 'AaBbCcD'], ['¶ Title', 'bd', 'AaBbCcI'], ['¶ No Spac...', '', 'AaBbCcI'], ['Subtle Em...', 'it gr', 'AaBbCcI'], ['Intense E...', 'it bl', 'AaBbCcI'], ['Quote', 'it gr', 'AaBbCcI'], ['Intense Q...', 'it bl ln', 'AaBbCcI'], ['Subtle Ref...', 'gr caps', 'AaBbCc']];

  const folders = [['Desktop', 'This PC', 'fDesktop', 1], ['Downloads', 'This PC', 'fDown', 1], ['Documents', 'This PC', 'fDoc', 1], ['Pictures', 'This PC', 'fPic', 1], ['Music', 'This PC', 'fMusic', 0], ['Net_Scan-master', 'This PC...\\Net_Scan-master', 'fNet', 0], ['OneDrive - Galway and R...', 'Glen Gardiner', 'fOne', 0], ['Videos', 'This PC', 'fVid', 0]];
  const files = [['Travel-GlenGardiner', 'This PC\\Desktop', 'w'], ['60App', 'This PC\\Desktop', 'app'], ['gretb-2-790x321', 'This PC\\Pictures', 'img'], ['image001', 'This PC\\Desktop', 'img'], ['Redeployment Timelines', 'Glen Gardiner\\OneDrive - Galway and Roscommon ETB', 'p'], ['Timelines', 'This PC\\Documents', 'w'], ['Lesson plan', 'This PC\\Documents', 'p'], ['Rm 14 Computer Issues May 2018', 'This PC\\Desktop', 'w'], ['msg0007', 'This PC\\Desktop', 'msg'], ['BAdams', 'This PC\\Desktop', 'xl']];
  const nav = [['Quick access', 'star'], ['OneDrive', 'cloud'], ['OneDrive - Galway and Roscommon ETB', 'cloud'], ['This PC', 'pc'], ['Network', 'net']];

  const tabs = [['Galway & Ros', 'zd'], ['Office Admin', 'office'], ['TRAVEL_EXPE', 'cloudD'], ['Mail - glen.ga', 'outlook'], ['VisionTime W', 'vision'], ['Your Reposito', 'github'], ['+1 512-265-5', 'google'], ['Work_on_site', 'sheets'], ['217 tirellan h', 'google'], ['Your Address', 'amazon'], ['upload video', 'google']];
  const palette = ['#000', '#7f7f7f', '#880015', '#ed1c24', '#ff7f27', '#fff200', '#22b14c', '#00a2e8', '#3f48cc', '#a349a4', '#fff', '#c3c3c3', '#b97a57', '#ffaec9', '#ffc90e', '#efe4b0', '#b5e61d', '#99d9ea', '#7092be', '#c8bfe7', ...Array(10).fill('#f5f6f7')];
  const shapes = ['M1 1l14 13', 'M1 14C5 2 7 2 8 8s4 4 7-6', 'M8 1a7 7 0 1 0 .1 0z', 'M1 1h14v14H1z', 'M4 1h8l3 3v8l-3 3H4l-3-3V4z', 'M1 15L5 1h9l-3 6h4v8z', 'M8 1l7 14H1z', 'M1 1v14h13z', 'M8 0l7 8-7 8-7-8z', 'M8 1l7 6-3 8H4L1 7z', 'M8 0l7 4v8l-7 4-7-4V4z', 'M1 5h7V1l7 7-7 7v-4H1z', 'M15 5H8V1L1 8l7 7v-4h7z', 'M5 15V8H1l7-7 7 7h-4v7z', 'M5 1v7H1l7 7 7-7h-4V1z', 'M8 0l2 6 6 2-6 2-2 6-2-6-6-2 6-2z', 'M8 0l2 6h6l-5 4 2 6-5-4-5 4 2-6-5-4h6z', 'M8 0l2.500 4H15l-2 4 2 4h-4.500L8 16l-2.500-4H1l2-4-2-4h4.500z', 'M3 1h10l2 2v7l-2 2H7l-3 4v-4H3l-2-2V3z', 'M8 1c9 0 9 11 0 11l-4 3 1-3.500C-1 9 0 1 8 1z', 'M5 2c2-2 4-1 5 0 3-1 5 1 4 4 2 2 1 5-2 5-1 3-4 3-6 1-3 1-5-1-4-4-2-3 0-5 3-6z'];
  const tasks = [['rdp', 1], ['explorer', 2], ['chrome', 1], ['snip', 0], ['firefox', 1], ['p3d', 1], ['ppt', 1], ['word', 1], ['palette', 1]];
  const statuses = ['New', 'Closed', 'Closed', 'Closed', 'Closed'];
</script>

{#snippet ic(name, w, h)}
  <svg width={w} height={h} viewBox="0 0 {icons[name][0]}">{@html icons[name][1]}</svg>
{/snippet}

{#snippet strip(x0, items)}
  {#each items as it, n}
    <span class="cell {it.c}" style:margin-left="{it.x - (n ? items[n - 1].x + items[n - 1].w : x0)}px" style:width="{it.w}px">{#if it.i}{@render ic(it.i, it.w, it.h)}{:else}{it.t}{/if}{#if it.c === 'box'}<i class="dd">{@render ic('caret', 6, 4)}</i>{/if}{#if it.c === 'share'}{@render ic('person', 15, 17)}<b>Share</b>{/if}</span>
  {/each}
{/snippet}

{#snippet taskbar(tray)}
  <div class="taskbar">
    <span class="tk">{@render ic('start', 16, 16)}</span>
    <span class="tk">{@render ic('tsearch', 17, 17)}</span>
    <span class="tk last">{@render ic('tview', 20, 14)}</span>
    {#each tasks as [name, st]}
      <span class="tk app" class:run={st === 1} class:cur={st === 2}>{@render ic(name, 24, 24)}</span>
    {/each}
    <div class="tray">
      {#if tray}{@render strip(3074, [I('ppl', 3074, 15, 16), I('tUp', 3111, 13, 7), I('cloud', 3133, 17, 14), I('tnet', 3157, 17, 15), I('snd', 3181, 17, 14), T('ENG', 3207, 28)])}{/if}
      <div class="clock"><span>16:28</span><span>07/06/2018</span></div>
      {#if tray}<div class="nt">{@render ic('notif', 17, 17)}</div>{/if}
    </div>
  </div>
{/snippet}

<svg class="defs" width="0" height="0">
  <defs>
    <linearGradient id="fg" x1="0" x2="1"><stop offset="0" stop-color="#e9bd50" /><stop offset="1" stop-color="#fbdc85" /></linearGradient>
    <linearGradient id="sp"><stop offset="0" stop-color="#f00" /><stop offset=".2" stop-color="#ff0" /><stop offset=".4" stop-color="#0f0" /><stop offset=".6" stop-color="#0ff" /><stop offset=".75" stop-color="#00f" /><stop offset="1" stop-color="#f0f" /></linearGradient>
    <linearGradient id="sk" x1="0" x2="0" y1="0" y2="1"><stop offset=".3" stop-color="#808080" stop-opacity="0" /><stop offset="1" stop-color="#808080" /></linearGradient>
    <linearGradient id="p3" x1=".8" x2=".3" y1="0" y2="1"><stop offset="0" stop-color="#29d3f5" /><stop offset=".35" stop-color="#7d6cf0" /><stop offset=".65" stop-color="#e0409a" /><stop offset="1" stop-color="#f9a13a" /></linearGradient>
  </defs>
</svg>

<div class="desk">
  <section class="monitor">
    <div class="word">
      <header class="whead">
        <svg class="circuit" width="500" height="52" viewBox="1180 0 500 52">
          <g fill="none" stroke="#24497f" stroke-width="4">
            <circle cx="1188" cy="15" r="3" /><path d="M1191 15h171" /><circle cx="1365" cy="15" r="3" /><path d="M1368 15h22l52 40M1257 33h93l28 12h14M1293 55l15-10h84" /><circle cx="1253" cy="33" r="3" /><circle cx="1395" cy="45" r="3" /><path d="M1398 45l26 10" />
            <circle cx="1460" cy="18" r="27" stroke-width="5" /><circle cx="1207" cy="38" r="17" /><path d="M1449 30l20-20M1450 8h20v20" stroke-width="7" /><path d="M1214 47l-13-13M1200 46V33h13" stroke-width="5" /><path d="M1545 55l32-30h103M1632 35l32-38M1650 35l32-38" />
          </g>
        </svg>
        <div class="ttools"></div>
        <div class="wtitle">{@render strip(0, [I('wsave', 19, 17, 17), I('wundo', 62, 17, 15), I('caretW', 85, 6, 4), I('wredo', 110, 14, 14), I('qaW', 158, 8, 7), T('Travel-GlenGardiner-10-04-18 [Compatibility Mode] - Word', 232, 330, 'dim'), T('Table Tools', 630, 65, 'dim'), I('ribbonOpt', 1512, 13, 11), I('wmin', 1560, 10, 3), I('wres', 1606, 10, 10), I('wx', 1652, 10, 10)])}</div>
        <div class="wtabs">{@render strip(0, wordTabs)}</div>
      </header>
      <div class="wribbon">
        <div class="grp clip">
          <div class="pastebox">{@render ic('paste', 28, 30)}<span>Paste</span>{@render ic('caret', 6, 4)}</div>
          <div class="cmds">
            <span class="off"><i>{@render ic('cut', 14, 14)}</i>Cut</span>
            <span class="off"><i>{@render ic('copy', 15, 14)}</i>Copy</span>
            <span><i>{@render ic('fpaint', 16, 14)}</i>Format Painter</span>
          </div>
          <div class="lab">Clipboard<i>{@render ic('launch', 7, 7)}</i></div>
        </div>
        <div class="grp font">
          <div class="r1">{@render strip(158, fontRow1)}</div>
          <div class="r2">{@render strip(158, fontRow2)}</div>
          <div class="lab">Font<i>{@render ic('launch', 7, 7)}</i></div>
        </div>
        <div class="grp para">
          <div class="r1">{@render strip(421, paraRow1)}</div>
          <div class="r2">{@render strip(421, paraRow2)}</div>
          <div class="lab">Paragraph<i>{@render ic('launch', 7, 7)}</i></div>
        </div>
        <div class="grp sty">
          <div class="gallery">
            {#each styles as [name, look, sample]}
              <div class="st {look}"><span class="sm">{sample}</span><span class="nm">{name}</span></div>
            {/each}
            <div class="scr"><i class="dis">{@render ic('caretG', 6, 4)}</i><i>{@render ic('caret', 6, 4)}</i><i>{@render ic('qaB', 7, 6)}</i></div>
          </div>
          <div class="lab">Styles<i>{@render ic('launch', 7, 7)}</i></div>
        </div>
        <div class="grp edit">
          <div class="cmds">
            <span><i>{@render ic('find', 14, 14)}</i>Find <em>{@render ic('caret', 6, 4)}</em></span>
            <span><i>{@render ic('replace', 17, 16)}</i>Replace</span>
            <span><i>{@render ic('cursor', 9, 14)}</i>Select{@render ic('caret', 6, 4)}</span>
          </div>
          <div class="lab">Editing</div>
        </div>
        <div class="collapse">{@render ic('chevUp', 10, 6)}</div>
      </div>
      <div class="wdoc">
        <div class="page">
          <p class="payee">Payee Number: GA071</p>
          <p class="h hb"><b>GALWAY &amp; ROSCOMMON ETB</b></p>
          <p class="h">TRAVELLING EXPENSES &amp; SUBSISTENCE ALLOWANCE</p>
          <div class="pbody">
            <div class="decl">
              <p class="d1"><b>DECLARATION BY CLAIMANT:</b> I hereby certify that:</p>
              <p>(a) The travel/other expenses claimed were actually &amp; necessarily incurred by me in the performance of my official duties</p>
              <p>(b) The travelling expenses claimed represent the lesser of the distances between my home and my temporary place of work and, my headquarters</p>
              <p>and my temporary place of work</p>
              <p>(c) That where a car was used, suitable public transport was not available.</p>
              <p>(d) My motor insurance policy covers full third party insurance on official business in respect of the car detailed above. The VEC has been indemnified</p>
              <p>on my insurance &nbsp;&nbsp;&nbsp; policy no. <b>DNDMR6469549</b>, expiry date 04/07/18.</p>
              <p>(e)&nbsp; I have a current driving licence and there is current vehicle registration tax on the car</p>
              <p>(f) I list details of travel and harmed nature to</p>
            </div>
            <div class="office"><b>FOR OFFICE USE:</b><span class="km">KMs:</span><span class="kml"></span></div>
          </div>
        </div>
      </div>
      <div class="wstatus">{@render strip(0, [T('Page 2 of 3', 7, 62), T('468 words', 83, 58), I('proof', 156, 15, 13), T('English (Ireland)', 187, 90), I('book', 1399, 15, 13), I('print', 1438, 13, 12), I('web', 1475, 14, 12), I('minus', 1508, 8, 8), I('zoomTrack', 1519, 100, 12), I('plus', 1621, 8, 8), T('100%', 1645, 30)])}</div>
    </div>
    {@render taskbar(false)}
  </section>

  <section class="monitor">
    <div class="chrome">
      <div class="tabstrip">
        {#each tabs as [name, icon], n}
          <div class="tab" class:act={n === 0}>
            <svg class="shape" width="144" height="29" viewBox="0 0 144 29"><path d="M0 28.500L10 2.500Q11 .5 13 .5H126Q129 .5 130 2.500L143 28.500" /></svg>
            <span class="fav">{@render ic(icon, 16, 16)}</span><span class="tt">{name}</span>{@render ic('tabX', 9, 9)}
          </div>
        {/each}
        <div class="newtab"></div>
        <div class="cwin">{@render strip(3157, [T('glen', 3183, 26, 'glen'), I('minG', 3239, 10, 2), I('resG', 3283, 11, 11), I('xG', 3330, 11, 11)])}</div>
      </div>
      <div class="toolbar">
        <div class="cnav">{@render strip(1680, [I('cback', 1690, 15, 14), I('cfwd', 1719, 15, 14), I('creload', 1747, 15, 15), I('chome', 1773, 17, 15)])}</div>
        <div class="url">{@render strip(1801, [I('lock', 1810, 9, 12), T('Secure', 1827, 46, 'grn'), V(1878, 16)])}<span class="addr"><b>https</b>://<em>gretb.zendesk.com</em>/agent/tickets/35957</span>{@render ic('cstar', 15, 15)}</div>
        {@render strip(3196, [I('ublock', 3207, 21, 24, 'low'), I('tv', 3238, 16, 15), I('lamp', 3271, 15, 15), I('gearG', 3302, 16, 16), I('dots', 3340, 4, 14)])}
      </div>
      <div class="bookmarks">{@render strip(1680, [I('apps', 1691, 13, 13), T('Apps', 1718, 30), I('bfold', 1759, 12, 14), T('G', 1785, 12), I('bfold', 1808, 12, 14), T('Imported', 1834, 54), I('spotify', 1896, 16, 16), T('Spotify', 1924, 44), I('dIcon', 1973, 16, 16), T('GUI Programming wi', 2001, 112, 'fade'), V(3214, 16), I('bfold', 3227, 12, 14), T('Other bookmarks', 3253, 100)])}</div>
      <div class="zen">
        <nav class="zside">
          <span class="zl">{@render ic('zdL', 26, 24)}</span>
          <span>{@render ic('zhome', 22, 18)}</span>
          <span>{@render ic('ztick', 16, 18)}</span>
          <span>{@render ic('zppl', 20, 16)}</span>
          <span>{@render ic('zbar', 17, 16)}</span>
          <span>{@render ic('zgear', 18, 18)}</span>
        </nav>
        <div class="zmain">
          <div class="ztop">
            <div class="ztab">{@render ic('zs', 14, 14)}<span>Search<br />frank</span></div>
            <div class="ztab2"></div>
            <div class="ztools">{@render strip(3204, [I('zs', 3204, 15, 15), I('grid4', 3258, 14, 14), I('avatar', 3303, 24, 24)])}</div>
          </div>
          <div class="zsub"><span class="brand">Gretb (create)</span><span class="btn nx">{@render ic('gt', 6, 10)}</span><span class="btn ap">Apps</span></div>
          <div class="zcols">
            <div class="zform">
              <div class="lb">Assignee*</div><div class="inp">-</div>
              <div class="lb cc">CCs</div><div class="inp big30 hint">search name</div>
              <hr />
              <div class="lb tg">Tags</div><div class="inp tags"><span class="chip">education {@render ic('zx', 8, 8)}</span><span class="chip"></span></div>
              <div class="lb ty">Type</div><div class="inp">-</div>
              <div class="lb sc">School/Center</div><div class="inp big30 sq"></div>
            </div>
            <div class="zmid"><p>Tagann an ríomhphost seo ó Bhord Oideachais agus Oiliúna na Gaillimhe agus Ros Comáin. Tá an ríomhphost, agus aon iatán a</p><i>{@render ic('caretB', 8, 5)}</i></div>
            <div class="zright">
              <div class="refr">{@render ic('zref', 13, 13)}</div>
              <div class="panel p1">
                <div class="ph1"></div>
                <div class="ph2">{@render ic('tickets', 25, 25)}</div>
                {#each statuses as s}
                  <div class="srow"><b>Status:</b> {s}</div>
                {/each}
              </div>
              <div class="panel p2">
                <div class="ph1"></div>
                <div class="ph2">{@render ic('timer', 25, 25)}</div>
                <div class="field"></div>
                <div class="pdoc"><div>{@render ic('doc', 10, 13)}</div></div>
              </div>
            </div>
          </div>
          <div class="zfoot">
            <span class="macro">{@render ic('bolt', 8, 13)}<em>Apply macro</em>{@render ic('chevDn', 9, 6)}</span>
            <span class="closet">Close tab {@render ic('chevDn', 8, 5)}</span>
            <span class="submit"><em>Submit as <b>New</b></em><i>{@render ic('chevDn', 8, 5)}</i></span>
          </div>
        </div>
      </div>
    </div>
    {@render taskbar(true)}
  </section>

  <!-- File Explorer window -->
  <div class="win explorer">
    <div class="etitle">{@render strip(273, [I('explorer', 281, 16, 16), V(304, 14), I('check', 316, 12, 16), I('blank', 338, 13, 16), I('qaB', 359, 7, 6), V(374, 14), T('File Explorer', 382, 80), I('min', 1277, 10, 2), I('max', 1321, 11, 11), I('x', 1368, 11, 11)])}</div>
    <div class="etabs"><span class="file">File</span>{@render strip(329, [T('Home', 343, 34), T('Share', 402, 34), T('View', 460, 30), I('chevDn', 1356, 9, 6), I('help', 1378, 14, 14)])}</div>
    <div class="eaddr">
      {@render strip(273, [I('back', 286, 13, 11), I('fwd', 315, 13, 11), I('dnS', 342, 7, 5), I('upA', 360, 12, 12)])}
      <div class="abox">{@render strip(380, [I('star', 384, 14, 13), I('chevR', 405, 5, 8), T('Quick access', 419, 74), I('chevDn', 1142, 8, 5), I('refresh', 1158, 11, 11)])}</div>
      <div class="sbox">Search Quick access {@render ic('mag', 11, 11)}</div>
    </div>
    <div class="emain">
      <div class="enav">
        {#each nav as [n, i], k}
          <div class="nv" class:sel={k === 0}>{@render ic('chevR', 6, 9)}<span>{@render ic(i, 17, 15)}</span>{n}</div>
        {/each}
      </div>
      <div class="econt">
        <div class="eh">{@render ic('chevDn', 11, 7)}<span>Frequent folders (8)</span><hr /></div>
        <div class="fgrid">
          {#each folders as [n, s, i, p]}
            <div class="fd">{@render ic(i, 40, 42)}<div><span>{n}</span><span class="sub">{s}</span>{#if p}{@render ic('pin', 11, 10)}{/if}</div></div>
          {/each}
        </div>
        <div class="eh rf">{@render ic('chevDn', 11, 7)}<span>Recent files (20)</span><hr /></div>
        {#each files as [n, s, i], k}
          <div class="fl"><span class="ok">{#if k === 4}{@render ic('ok', 12, 12)}{/if}</span>{@render ic(i, 21, 23)}<span class="fn">{n}</span><span class="fp">{s}</span></div>
        {/each}
      </div>
      <div class="sb"><i>{@render ic('chevUp', 8, 5)}</i><b></b><i class="end">{@render ic('chevDn', 8, 5)}</i></div>
    </div>
    <div class="estat">{@render strip(273, [T('28 items', 287, 50), V(341, 14), I('list', 1351, 16, 13), I('thumb', 1374, 14, 11)])}</div>
  </div>

  <!-- Paint window -->
  <div class="win paint">
    <div class="ptitle">{@render strip(1855, [I('palette', 1863, 17, 17), V(1886, 14), I('psave', 1897, 14, 14), I('pundo', 1920, 13, 14), I('predo', 1941, 13, 14), I('qaB', 1963, 7, 6), V(1978, 14), T('Untitled - Paint', 1986, 90, 'gry'), I('minG', 3064, 10, 2), I('maxG', 3108, 11, 11), I('xG', 3155, 11, 11)])}</div>
    <div class="ptabs"><span class="file">File</span><span class="ph">Home</span>{@render strip(1968, [T('View', 1984, 30), I('chevUp', 3145, 9, 6), I('help', 3165, 14, 14)])}</div>
    <div class="prib">
      <div class="pg g1">
        <div class="pb">
          <div class="tall">{@render ic('ppaste', 26, 31)}<span>Paste</span>{@render ic('caretB', 6, 4)}</div>
          <div class="pc"><span class="off"><i>{@render ic('pcut', 11, 14)}</i>Cut</span><span class="off"><i>{@render ic('pcopy', 15, 15)}</i>Copy</span></div>
        </div><div class="pl">Clipboard</div>
      </div>
      <div class="pg g2">
        <div class="pb">
          <div class="tall select"><u>{@render ic('marquee', 30, 24)}</u><span>Select</span>{@render ic('caretB', 6, 4)}</div>
          <div class="pc"><span class="off"><i>{@render ic('crop', 14, 13)}</i>Crop</span><span><i>{@render ic('resize', 14, 13)}</i>Resize</span><span><i>{@render ic('rotate', 14, 13)}</i>Rotate<em>{@render ic('caretB', 6, 4)}</em></span></div>
        </div><div class="pl">Image</div>
      </div>
      <div class="pg g3">
        <div class="tools"><i>{@render ic('pencil', 16, 16)}</i><i>{@render ic('pfill', 17, 16)}</i><i class="ta">A</i><i>{@render ic('eras', 16, 14)}</i><i>{@render ic('picker', 16, 16)}</i><i>{@render ic('pmag', 15, 16)}</i></div>
        <div class="pl">Tools</div>
      </div>
      <div class="pg g4"><div class="tall">{@render ic('brush', 32, 32)}<span>Brushes</span>{@render ic('caretB', 6, 4)}</div></div>
      <div class="pg g5">
        <div class="pb">
          <div class="shapes">
            <div class="sgrid">{#each shapes as d}<svg width="16" height="16" viewBox="0 0 16 16"><path d={d} fill="#eef6fd" stroke="#1f66a6" stroke-width="1.200" /></svg>{/each}</div>
            <div class="sscr">{@render ic('caretG', 6, 4)}{@render ic('caretB', 6, 4)}{@render ic('qaB', 7, 6)}</div>
          </div>
          <div class="pc"><span class="off"><i>{@render ic('outl', 15, 14)}</i>Outline<em>{@render ic('caretG', 5, 4)}</em></span><span class="off"><i>{@render ic('pfillG', 16, 16)}</i>Fill<em>{@render ic('caretG', 5, 4)}</em></span></div>
        </div><div class="pl">Shapes</div>
      </div>
      <div class="pg g6"><div class="tall off">{@render ic('lines', 32, 30)}<span>Size</span>{@render ic('caretG', 6, 4)}</div></div>
      <div class="pg g7">
        <div class="pb">
          <div class="c1"><b></b><span>Color<br />1</span></div>
          <div class="c2"><b></b><span>Color<br />2</span></div>
          <div class="pal">{#each palette as c}<i style:background={c}></i>{/each}</div>
          <div class="ec">{@render ic('spectrum', 28, 30)}<span>Edit<br />colors</span></div>
        </div><div class="pl">Colors</div>
      </div>
      <div class="pg g8"><div class="ec">{@render ic('p3box', 29, 30)}<span>Open<br />Paint 3D</span></div></div>
    </div>
    <div class="pcanvas">
      <div class="cv"></div>
      <div class="sb"><i>{@render ic('chevUp', 8, 5)}</i><b></b><i class="end">{@render ic('chevDn', 8, 5)}</i></div>
    </div>
    <div class="hsb"><i>{@render ic('chevL', 5, 9)}</i><b></b><i class="end">{@render ic('chevR', 6, 9)}</i></div>
    <div class="pstat">{@render strip(1855, [I('move', 1859, 12, 12), V(2010, 23), I('selSz', 2016, 13, 13), T('1 × 1px', 2035, 50), V(2166, 23), I('imgSz', 2172, 13, 13), T('3360 × 1050px', 2191, 90), V(2322, 23), V(2478, 23), V(2966, 23), T('100%', 2987, 32), I('zm', 3022, 16, 16), I('ptrack', 3048, 86, 18), I('zp', 3144, 16, 16), I('grip', 3173, 8, 8, 'gripc')])}</div>
  </div>
</div>

<style>
  :global(body) { margin: 0; background: #fff; }
  * { box-sizing: border-box; }
  svg { display: block; flex: none; overflow: visible; }
  i, em { font-style: normal; }
  p { margin: 0; }
  .defs { position: absolute; }
  .desk { position: relative; width: 3360px; height: 1050px; overflow: hidden; display: flex; font: 12px/16px "Open Sans", "Noto Sans", sans-serif; letter-spacing: -0.3px; color: #111; white-space: nowrap; }
  .monitor { width: 1680px; height: 1050px; display: flex; flex-direction: column; overflow: hidden; }
  .cell { flex: none; display: flex; align-items: center; }
  .vsep { background: #d2d2d2; overflow: hidden; }

  /* taskbar */
  .taskbar { height: 40px; flex: none; display: flex; background: linear-gradient(100deg, #040c12, #0c1418 20%, #050b10 55%, #0b0d0f 75%, #02060a); color: #fff; }
  .tk { width: 48px; flex: none; display: flex; align-items: center; justify-content: center; }
  .tk.last { margin-right: 2px; }
  .tk.app { width: 41px; margin: 0 4px; padding-top: 1px; }
  .tk.run { box-shadow: inset 0 -2px #76b9ed; }
  .tk.app.cur { background: #3b454b; box-shadow: inset 0 -2px #76b9ed; width: 49px; margin: 0; }
  .tray { margin-left: auto; display: flex; align-items: center; padding-right: 1px; }
  .clock { display: flex; flex-direction: column; align-items: center; width: 74px; }
  .monitor:first-child .clock { margin-right: -8px; }
  .nt { width: 51px; display: flex; padding-left: 9px; height: 40px; align-items: center; border-right: 1px solid #555; }

  /* Word */
  .word { height: 1010px; display: flex; flex-direction: column; }
  .whead { height: 57px; flex: none; background: #2b579a; color: #fff; position: relative; }
  .circuit { position: absolute; right: 0; top: 0; overflow: hidden; }
  .ttools { position: absolute; left: 595px; top: 0; width: 128px; height: 57px; background: #22437a; }
  .wtitle { position: relative; height: 33px; display: flex; align-items: center; padding-top: 1px; }
  .wtabs { position: relative; height: 24px; display: flex; }
  .dim { color: #b4c5e0; }
  .on { background: #f1f1f1; color: #2b579a; justify-content: center; }
  .share { background: #14427c; gap: 4px; padding-left: 6px; }
  .share b { font-weight: 400; }
  .wribbon { height: 92px; flex: none; background: #f1f1f1; border-bottom: 1px solid #c8c8c8; display: flex; color: #444; }
  .grp { flex: none; height: 91px; position: relative; border-right: 1px solid #d4d4d4; border-image: linear-gradient(#f1f1f1 4px, #d0d0d0 4px, #d0d0d0 88px, #f1f1f1 88px) 1; display: flex; flex-wrap: wrap; align-content: flex-start; padding-top: 4px; }
  .clip { width: 158px; } .font { width: 263px; } .para { width: 225px; } .sty { width: 894px; } .edit { width: 79px; }
  .lab { width: 100%; height: 16px; display: flex; justify-content: center; color: #666; position: relative; }
  .lab i { position: absolute; right: 4px; top: 5px; }
  .pastebox { width: 50px; height: 72px; padding-top: 4px; display: flex; flex-direction: column; align-items: center; }
  .pastebox span { margin: 3px 0 5px; }
  .cmds { display: flex; flex-direction: column; height: 72px; }
  .cmds span { height: 23px; display: flex; align-items: center; }
  .cmds i { width: 18px; display: flex; }
  .cmds em { margin-left: 9px; }
  .edit .cmds { padding-left: 8px; }
  .off { color: #9d9d9d; }
  .r1, .r2 { display: flex; align-items: center; width: 100%; }
  .r1 { height: 38px; }
  .r2 { height: 24px; margin-bottom: 10px; }
  .box { height: 24px; background: #fff; border: 1px solid #ababab; padding-left: 4px; }
  .dd { margin-left: auto; margin-right: 5px; }
  .big { font-size: 15px; }
  .sup { align-self: flex-start; margin-top: 11px; } .flip svg { transform: rotate(180deg); }
  .b { font-weight: 700; font-size: 13px; } .bi { font: italic 700 14px "Liberation Serif", serif; } .bu { font-weight: 700; text-decoration: underline; font-size: 13px; }
  .strike { text-decoration: line-through; font-weight: 600; letter-spacing: -0.8px; }
  .ghost { color: #f8f8f8; font-size: 17px; -webkit-text-stroke: 1px #9a9a9a; }
  .hl { border-bottom: 4px solid #ff0; height: 18px; font-weight: 600; } .red { border-bottom: 4px solid #f00; height: 18px; font-weight: 700; font-size: 14px; justify-content: center; }
  .pil { font-size: 17px; }
  .press { background: #c6c6c6; height: 24px; justify-content: center; } .press svg { width: 14px; }
  .press:last-child svg { width: 6px; }
  .gallery { margin: 2px 0 13px 5px; height: 60px; width: 882px; border: 1px solid #ababab; background: #fff; display: flex; }
  .sty .lab { margin-top: -3px; }
  .st { width: 72px; flex: none; height: 54px; margin-top: 2px; display: flex; flex-direction: column; align-items: center; border: 3px solid transparent; padding-top: 8px; }
  .st.sel { border-color: #c6c6c6; }
  .sm { font: 17px/18px "Liberation Serif", serif; color: #000; height: 20px; width: 59px; letter-spacing: -0.7px; display: flex; justify-content: center; }
  .nm { color: #555; margin-top: 6px; line-height: 16px; }
  .it .sm { font-style: italic; } .bd .sm { font-weight: 700; font-size: 16px; } .sml .sm { font-size: 13.500px; letter-spacing: -0.4px; }
  .sans .sm { font: 300 14.500px/18px "Open Sans", sans-serif; } .gr .sm { color: #555; } .bl .sm { color: #5b9bd5; }
  .ln .sm { box-shadow: 0 -2px #5b9bd5, 0 1px #5b9bd5; } .caps .sm { font-variant: small-caps; }
  .scr { margin-left: auto; width: 14px; display: flex; flex-direction: column; border-left: 1px solid #ababab; }
  .scr i { flex: 1; display: flex; align-items: center; justify-content: center; border-bottom: 1px solid #ababab; } .scr .dis { background: #e4e4e4; } .scr i:last-child { border: 0; }
  .collapse { align-self: flex-end; margin: 0 0 5px 42px; }
  .wdoc { flex: 1; background: #e6e6e6; overflow: hidden; display: flex; padding-left: 270px; }
  .page { width: 1122px; background: #fff; border: solid #c6c6c6; border-width: 0 1px; padding: 655px 51px 0 52px; font-family: "Liberation Serif", serif; letter-spacing: 0; color: #808080; font-size: 16px; }
  .page p { line-height: 18px; }
  .payee { text-align: right; padding-right: 1px; margin-bottom: 1px; }
  .page .h { text-align: center; letter-spacing: 0.1px; width: 1020px; margin-left: -1px; }
  .page .hb { letter-spacing: 0.350px; }
  .pbody { display: flex; color: #000; font-size: 12px; margin-top: 15px; }
  .decl { width: 863px; height: 120px; }
  .page .decl p { line-height: 13.900px; letter-spacing: 0; }
  .page .decl .d1 { font-size: 13.300px; line-height: 15px; letter-spacing: -0.070px; }
  .office { width: 133px; height: 110px; margin-top: 28px; border: 1px solid #000; padding: 7px 10px; font-size: 16px; line-height: 19px; white-space: normal; display: flex; flex-wrap: wrap; align-content: flex-start; }
  .office b { width: 100%; letter-spacing: -0.5px; }
  .km { text-decoration: underline wavy #22f 1px; letter-spacing: -0.3px; }
  .kml { flex: 1; border-bottom: 1px solid #000; height: 15px; }
  .wstatus { height: 22px; flex: none; background: #f1f1f1; border-top: 1px solid #c0c0c0; display: flex; align-items: center; color: #444; }

  /* Windows */
  .win { position: absolute; background: #fff; display: flex; flex-direction: column; box-shadow: 0 5px 16px rgba(0, 0, 0, 0.35); }
  .explorer { left: 272px; top: 142px; width: 1125px; height: 634px; border: 1px solid #1979ca; }
  .etitle { height: 30px; flex: none; display: flex; align-items: center; }
  .file { width: 56px; background: #1979ca; color: #fff; display: flex; align-items: center; justify-content: center; flex: none; }
  .etabs { height: 24px; flex: none; display: flex; border-bottom: 1px solid #dadbdc; color: #333; }
  .eaddr { height: 35px; flex: none; display: flex; align-items: center; }
  .abox { margin-left: 7px; width: 795px; height: 22px; border: 1px solid #d9d9d9; display: flex; }
  .sbox { margin-left: 7px; width: 205px; height: 22px; border: 1px solid #d9d9d9; display: flex; align-items: center; justify-content: space-between; padding: 0 9px; color: #6d6d6d; }
  .emain { height: 520px; flex: none; display: flex; }
  .enav { width: 319px; border-right: 1px solid #f0f0f0; padding-top: 12px; }
  .nv { height: 24px; margin: 4px 2px 8px 0; display: flex; align-items: center; padding-left: 8px; }
  .nv span { width: 17px; margin: 0 3px 0 11px; display: flex; justify-content: center; }
  .nv.sel { background: #cce8ff; }
  .econt { width: 788px; padding: 1px 0 0 7px; overflow: hidden; }
  .eh { display: flex; align-items: center; height: 36px; font-size: 15px; color: #1e3287; letter-spacing: -0.350px; }
  .eh span { margin: 0 7px 0 4px; }
  .eh hr { flex: 1; border: 0; height: 1px; background: #e2e2e2; margin: 0 10px 0 0; }
  .fgrid { display: grid; grid-template-columns: repeat(3, 228px); grid-auto-rows: 64px; padding-left: 36px; height: 200px; padding-top: 4px; }
  .fd { display: flex; }
  .fd > svg { margin-top: 8px; }
  .fd div { margin-left: 5px; padding-top: 3px; display: flex; flex-direction: column; }
  .fd div svg { margin-top: 2px; }
  .sub, .fp, .gry { color: #757575; }
  .fl { height: 25px; display: flex; align-items: center; }
  .rf { height: 34px; margin: -1px 0 6px; }
  .ok { width: 28px; padding-left: 12px; }
  .fn { margin-left: 12px; width: 363px; }
  .sb { width: 15px; background: #f0f0f0; display: flex; flex-direction: column; align-items: center; }
  .sb b { width: 15px; height: 233px; background: #cdcdcd; }
  .sb i { height: 17px; display: flex; align-items: center; }
  .sb .end { margin-top: auto; }
  .estat { flex: 1; display: flex; align-items: center; }

  /* Chrome */
  .chrome { height: 1010px; display: flex; flex-direction: column; }
  .tabstrip { height: 29px; flex: none; display: flex; padding-left: 5px; background: #fff; }
  .tab { width: 129.600px; flex: none; position: relative; display: flex; align-items: center; padding-left: 15px; padding-top: 1px; color: #444; }
  .tab > svg { position: relative; }
  .tab .shape { position: absolute; left: 0; top: 0; fill: #cecece; stroke: #a3a3a3; }
  .tab.act { z-index: 2; } .tab.act .shape { fill: #f2f2f2; }
  .fav, .tt { position: relative; }
  .tt { width: 75px; margin: 0 8px 0 6px; overflow: hidden; mask-image: linear-gradient(90deg, #000 72%, transparent 100%); font-size: 12px; letter-spacing: -0.450px; }
  .newtab { width: 34px; height: 16px; margin: 7px 0 0 12px; background: #cecece; border: 1px solid #b8b8b8; border-radius: 3px; transform: skewX(20deg); }
  .cwin { display: flex; }
  .glen { font-size: 11px; color: #444; text-shadow: 0 0 2px #888; }
  .toolbar { height: 32px; flex: none; background: #f2f2f2; border-top: 1px solid #a8a8a8; display: flex; align-items: center; padding-top: 2px; }
  .cnav { width: 120px; display: flex; }
  .url { width: 1396px; height: 28px; background: #fff; border: 1px solid #a9a9a9; border-radius: 3px; display: flex; align-items: center; font-size: 14px; color: #777; }
  .url .addr { margin-left: 8px; margin-right: auto; letter-spacing: -0.380px; } .url b { font-weight: 400; color: #2e7d3a; } .url em { color: #111; }
  .url > svg { margin-right: 6px; }
  .grn { color: #2e7d3a; font-size: 13.500px; }
  .low { align-self: flex-end; }
  .bookmarks { height: 30px; flex: none; background: #f2f2f2; border-bottom: 1px solid #a8a8a8; display: flex; align-items: center; color: #333; }
  .fade { overflow: hidden; mask-image: linear-gradient(90deg, #000 85%, transparent); letter-spacing: -0.450px; }

  /* Zendesk */
  .zen { height: 919px; display: flex; }
  .zside { width: 60px; background: #12373a; display: flex; flex-direction: column; padding-top: 50px; }
  .zside span { height: 50px; display: flex; align-items: center; justify-content: center; }
  .zside .zl { margin-top: -40px; }
  .zmain { width: 1620px; display: flex; flex-direction: column; background: #fff; color: #555e66; }
  .ztop { height: 50px; flex: none; border-bottom: 1px solid #ddd; display: flex; }
  .ztab { width: 250px; display: flex; align-items: center; padding-left: 19px; gap: 12px; line-height: 13px; color: #444; }
  .ztab2 { width: 252px; background: #f8f8f8; border: solid #ddd; border-width: 0 1px; }
  .ztools { margin-left: 962px; display: flex; align-items: center; }
  .zsub { height: 51px; flex: none; background: #f8f8f8; border-bottom: 1px solid #ddd; padding: 10px; display: flex; }
  .brand { width: 300px; height: 29px; border: 1px solid #d8d8d8; border-radius: 4px; padding-left: 12px; display: flex; align-items: center; font-size: 13px; color: #444; letter-spacing: -0.2px; }
  .btn { height: 29px; border: 1px solid #d8d8d8; border-radius: 4px; display: flex; align-items: center; justify-content: center; }
  .nx { margin-left: 1197px; width: 40px; background: #fbfbfb; } .ap { margin-left: 10px; width: 53px; background: #ececec; font-size: 13px; letter-spacing: -0.1px; }
  .zcols { height: 768px; flex: none; display: flex; }
  .zform { width: 331px; background: #f8f8f8; padding: 27px 0 0 31px; font-size: 12px; letter-spacing: -0.1px; }
  .lb { height: 21px; line-height: 16px; }
  .inp { height: 29px; border: 1px solid #d4d7d9; border-radius: 4px; background: #fff; padding-left: 8px; display: flex; align-items: center; color: #333; }
  .inp.big30 { height: 30px; } .inp.sq { border-radius: 1px; } .inp.hint { color: #8a8a8a; font-size: 14px; padding: 0 0 2px 9px; letter-spacing: -0.150px; }
  .zform .cc { margin-top: 12px; } .zform hr { margin: 28px 0 0 -31px; border: 0; height: 1px; background: #ddd; }
  .zform .tg { margin-top: 27px; } .zform .ty { margin-top: 14px; } .zform .sc { margin-top: 12px; }
  .inp.tags { height: 33px; padding-left: 4px; gap: 3px; }
  .chip { width: 73px; flex: none; height: 22px; border: 1px solid #c2c8cc; border-radius: 2px; background: #f8f9f9; display: flex; align-items: center; gap: 3px; padding-left: 6px; letter-spacing: -0.500px; }
  .zmid { width: 921px; border: solid #d8d8d8; border-width: 0 1px; display: flex; justify-content: space-between; }
  .zmid p { margin-top: 744px; margin-left: 90px; font-size: 13.500px; color: #444; letter-spacing: -0.160px; }
  .zmid i { width: 18px; background: #f0f0f0; display: flex; justify-content: center; padding-top: 757px; }
  .zright { width: 368px; background: #f8f8f8; padding-right: 10px; }
  .refr { height: 26px; display: flex; justify-content: flex-end; padding-top: 8px; }
  .panel { border: 1px solid #d8d8d8; border-radius: 4px; background: #fff; padding-right: 15px; }
  .p1 { height: 351px; } .p2 { height: 209px; margin-top: 10px; }
  .ph1 { height: 23px; border-bottom: 1px solid #ddd; margin-right: -15px; }
  .ph2 { height: 41px; border-bottom: 1px dotted #bbb; display: flex; justify-content: flex-end; padding-top: 10px; }
  .srow { padding: 8px 0 0 194px; height: 51px; border-bottom: 1px solid #e4e4e4; font-size: 13px; color: #333; letter-spacing: -0.100px; }
  .srow:nth-child(3) { height: 60px; padding-top: 18px; } .srow:nth-child(5) { height: 33px; } .srow:nth-child(7) { height: 70px; }
  .field { margin: 12px -2px 15px 0; height: 25px; border: 1px solid #ccc; }
  .pdoc { height: 72px; border: solid #eaeaea; border-width: 0 1px 1px 0; }
  .pdoc div { height: 29px; background: #efefef; padding: 6px 0 0 258px; }
  .zfoot { flex: 1; border-top: 1px solid #d8d8d8; display: flex; background: #fff; }
  .macro { margin: 7px 0 0 341px; width: 300px; height: 35px; border: 1px solid #d4d7d9; border-radius: 4px; display: flex; align-items: center; padding: 2px 10px 0 13px; font-size: 13.500px; letter-spacing: -0.100px; }
  .macro em { margin: 0 auto 0 9px; }
  .closet { margin-left: 674px; display: flex; align-items: center; gap: 7px; height: 51px; }
  .submit { margin: 5px 10px 0 auto; width: 212px; height: 39px; background: #2f3941; border-radius: 4px; color: #a8adb2; display: flex; font-size: 13.500px; }
  .submit em { flex: 1; display: flex; align-items: center; justify-content: center; gap: 4px; padding-top: 2px; }
  .submit b { color: #fff; font-weight: 600; }
  .submit i { width: 32px; border-left: 1px solid #4d565e; display: flex; align-items: center; justify-content: center; }

  /* Paint */
  .paint { left: 1854px; top: 104px; width: 1330px; height: 833px; border: 1px solid #a0a0a0; }
  .ptitle { height: 30px; flex: none; display: flex; align-items: center; }
  .ptabs { height: 24px; flex: none; display: flex; border-bottom: 1px solid #dadbdc; color: #333; }
  .ptabs .ph { width: 57px; background: #f5f6f7; border: 1px solid #dadbdc; border-bottom: 0; height: 24px; display: flex; align-items: center; justify-content: center; }
  .prib { height: 92px; flex: none; background: #f5f6f7; border-bottom: 1px solid #d5d8de; display: flex; color: #333; }
  .pg { flex: none; margin: 2px 0; border-right: 1px solid #e0e1e3; display: flex; flex-direction: column; }
  .g1 { width: 107px; } .g2 { width: 122px; } .g3 { width: 80px; } .g4 { width: 57px; } .g5 { width: 246px; } .g6 { width: 53px; } .g7 { width: 357px; } .g8 { width: 59px; }
  .pb { display: flex; height: 73px; }
  .pl { text-align: center; color: #5a5a5a; }
  .tall { display: flex; flex-direction: column; align-items: center; padding-top: 4px; }
  .tall span { margin: 3px 0 3px; }
  .g1 .tall { width: 38px; margin-left: 7px; }
  .select { width: 43px; height: 67px; margin: 2px 0 0 3px; padding: 0; background: #c9e0f7; border: 1px solid #62a2e4; }
  .select u { height: 37px; display: flex; align-items: center; border-bottom: 1px solid #62a2e4; width: 41px; justify-content: center; } .select span { margin: 0 0 3px; }
  .pc { padding-top: 2px; margin-left: 4px; }
  .pc span { height: 22px; display: flex; align-items: center; } .pc i { width: 18px; display: flex; justify-content: center; margin-right: 1px; } .pc em { margin-left: 5px; }
  .g2 .pc i { margin-right: 0; }
  .tools { height: 73px; display: grid; grid-template-columns: repeat(3, 24px); grid-auto-rows: 28px; padding: 9px 0 0 2px; }
  .tools i { display: flex; align-items: center; justify-content: center; }
  .tools .ta { font: 700 17px "Liberation Serif", serif; color: #1f3d66; }
  .shapes { margin: 5px 0 0 5px; width: 157px; height: 60px; border: 1px solid #ccd; display: flex; background: #f9fbfd; }
  .sgrid { width: 141px; display: grid; grid-template-columns: repeat(7, 20px); grid-auto-rows: 19.500px; padding: 2px 0 0 3px; }
  .sscr { width: 15px; border-left: 1px solid #d8d8e0; display: flex; flex-direction: column; align-items: center; justify-content: space-around; }
  .g5 .pc { margin-left: 3px; } .g5 .pl { margin-left: -2px; }
  .c1, .c2, .ec { display: flex; flex-direction: column; align-items: center; text-align: center; line-height: 13px; }
  .c1 { width: 43px; height: 67px; margin: 2px 0 0 4px; background: #c9e0f7; border: 1px solid #62a2e4; padding-top: 2px; }
  .c1 b { width: 32px; height: 32px; background: #000; border: 1px solid #777; box-shadow: inset 0 0 0 1px #fff; margin-bottom: 4px; }
  .c2 { width: 38px; padding-top: 9px; } .c2 b { width: 24px; height: 24px; background: #fff; border: 1px solid #777; margin-bottom: 8px; }
  .pal { width: 218px; margin: 3px 0 0 4px; display: grid; grid-template-columns: repeat(10, 20px); gap: 2px; grid-auto-rows: 20px; }
  .pal i { border: 1px solid #a0a0a0; box-shadow: inset 0 0 0 1px #fff; }
  .ec { padding-top: 6px; width: 48px; } .ec span { margin-top: 5px; } .g8 .ec { width: 58px; }
  .pcanvas { height: 643px; flex: none; background: linear-gradient(#c8d1e3, #dce6f4); display: flex; }
  .cv { width: 1307px; margin: 5px 0 0 5px; background: #fff; flex: none; }
  .pcanvas .sb { width: 16px; } .pcanvas .sb b { height: 368px; }
  .hsb { height: 15px; flex: none; display: flex; background: #f0f0f0; align-items: center; }
  .hsb i { width: 17px; display: flex; justify-content: center; } .hsb b { width: 497px; height: 15px; background: #cdcdcd; } .hsb .end { margin-left: auto; margin-right: 18px; }
  .pstat { flex: 1; background: #f0f0f0; border-top: 1px solid #d7d7d7; display: flex; align-items: center; }
  .gripc { align-self: flex-end; margin-bottom: 2px; }
</style>
